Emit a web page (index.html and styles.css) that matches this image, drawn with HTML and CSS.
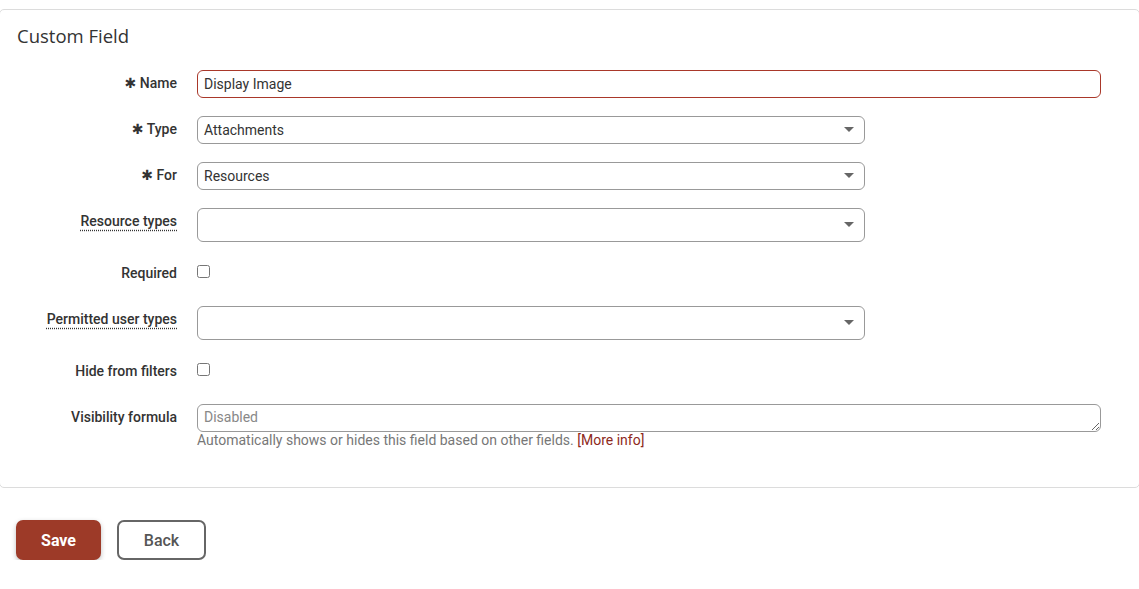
FILE: index.html
```html
<!doctype html>
<html lang="en">
<head>
    <meta charset="utf-8">
    <title>Custom Field</title>
    <link rel="stylesheet" href="styles.css">
</head>
<body>
    <div class="panel">
        <h2 class="panel-title">Custom Field</h2>
        <div class="form">
            <div class="row">
                <label class="label"><span class="req">&#x2731;</span> Name</label>
                <div class="field"><input class="input input-error" type="text" value="Display Image"></div>
            </div>
            <div class="row">
                <label class="label"><span class="req">&#x2731;</span> Type</label>
                <div class="field">
                    <div class="select"><span class="select-text">Attachments</span><span class="arrow"></span></div>
                </div>
            </div>
            <div class="row">
                <label class="label"><span class="req">&#x2731;</span> For</label>
                <div class="field">
                    <div class="select"><span class="select-text">Resources</span><span class="arrow"></span></div>
                </div>
            </div>
            <div class="row">
                <label class="label"><span class="hint">Resource types</span></label>
                <div class="field">
                    <div class="select select-multi"><span class="select-text"></span><span class="arrow"></span></div>
                </div>
            </div>
            <div class="row">
                <label class="label">Required</label>
                <div class="field"><input class="check" type="checkbox"></div>
            </div>
            <div class="row">
                <label class="label"><span class="hint">Permitted user types</span></label>
                <div class="field">
                    <div class="select select-multi"><span class="select-text"></span><span class="arrow"></span></div>
                </div>
            </div>
            <div class="row">
                <label class="label">Hide from filters</label>
                <div class="field"><input class="check" type="checkbox"></div>
            </div>
            <div class="row">
                <label class="label">Visibility formula</label>
                <div class="field">
                    <textarea class="input textarea" rows="1" placeholder="Disabled"></textarea>
                    <div class="help">Automatically shows or hides this field based on other fields. <a href="#">[More info]</a></div>
                </div>
            </div>
        </div>
    </div>

    <div class="actions">
        <button class="btn btn-primary">Save</button>
        <button class="btn btn-default">Back</button>
    </div>
</body>
</html>
```

FILE: styles.css
```css
body {
    margin: 0;
    font-family: Roboto, "Liberation Sans", Arial, sans-serif;
    font-size: 14px;
    color: #333;
    background: #fff;
}

.panel {
    margin: 9px -1px 0 -1px;
    border: 1px solid #dcdcdc;
    border-radius: 5px;
    padding: 0 38px 38px 17px;
}
.panel-title {
    margin: 0;
    padding-top: 14px;
    font-family: "Open Sans", "Noto Sans", sans-serif;
    font-size: 18.5px;
    line-height: 24px;
    font-weight: 500;
    color: #333;
}

.form {
    margin-top: 22px;
    display: flex;
    flex-direction: column;
    gap: 18px;
}
.row {
    display: grid;
    grid-template-columns: 160px 1fr;
    column-gap: 20px;
    align-items: start;
}
.label {
    height: 28px;
    text-align: right;
    line-height: 27px;
    font-weight: 500;
    color: #333;
}
.req {
    display: inline-block;
    line-height: 1;
    font-family: "DejaVu Sans", sans-serif;
    font-size: 14px;
    font-weight: 700;
    color: #333;
}
.hint {
    text-decoration: underline dotted #333;
    text-underline-offset: 4px;
}

.input {
    box-sizing: border-box;
    display: block;
    width: 100%;
    height: 28px;
    padding: 0 6px 1px;
    border: 1px solid #999;
    border-radius: 6px;
    font-family: inherit;
    font-size: 14px;
    color: #333;
    background: #fff;
    outline: none;
}
.input-error { border-color: #a9382a; }
.textarea {
    line-height: 24px;
    padding-top: 0;
    resize: vertical;
    overflow: hidden;
}
.textarea::placeholder { color: #888; }

.select {
    box-sizing: border-box;
    width: 668px;
    height: 28px;
    display: flex;
    align-items: center;
    padding: 0 10px 1px 6px;
    border: 1px solid #999;
    border-radius: 6px;
    background: #fff;
}
.select-multi { height: 34px; }
.select-text { flex: 1; }
.arrow {
    width: 0;
    height: 0;
    border-left: 5px solid transparent;
    border-right: 5px solid transparent;
    border-top: 5px solid #666;
}

.check {
    display: block;
    margin: 5px 0 0 0;
    width: 13px;
    height: 13px;
}

.help {
    line-height: 17px;
    color: #777;
}
.help a {
    color: #8e2a1c;
    text-decoration: none;
}

.actions {
    margin-top: 32px;
    padding-left: 16px;
    display: flex;
    gap: 16px;
}
.btn {
    box-sizing: border-box;
    height: 40px;
    border-radius: 7px;
    font-family: Roboto, "Liberation Sans", sans-serif;
    font-size: 16px;
    cursor: pointer;
}
.btn-primary {
    width: 85px;
    border: 0;
    background: #9d3a28;
    color: #fff;
    font-weight: 700;
    box-shadow: 0 2px 5px rgba(0, 0, 0, 0.25);
}
.btn-default {
    width: 89px;
    border: 2px solid #666;
    background: #fff;
    color: #555;
    font-weight: 500;
}
```
